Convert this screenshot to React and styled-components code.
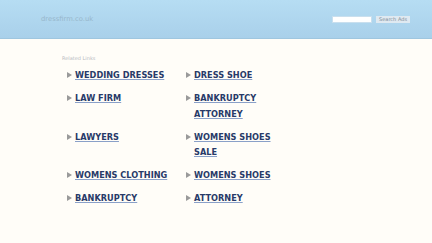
import React from 'react';
import styled, { createGlobalStyle } from 'styled-components';

const GlobalStyle = createGlobalStyle`
  html, body {
    margin: 0;
    padding: 0;
    background: #fffdf8;
    font-family: "DejaVu Sans", sans-serif;
  }
`;

const links = [
  ['WEDDING DRESSES', 'DRESS SHOE'],
  ['LAW FIRM', 'BANKRUPTCY ATTORNEY'],
  ['LAWYERS', 'WOMENS SHOES SALE'],
  ['WOMENS CLOTHING', 'WOMENS SHOES'],
  ['BANKRUPTCY', 'ATTORNEY'],
];

function App() {
  return (
    <>
      <GlobalStyle />
      <Header>
        <Domain>dressfirm.co.uk</Domain>
        <Search>
          <SearchInput type="text" />
          <SearchButton>Search Ads</SearchButton>
        </Search>
      </Header>
      <Main>
        <Related>Related Links</Related>
        <Grid>
          {links.map((row) =>
            row.map((label) => (
              <Item key={label}>
                <Arrow />
                <Link href="#">{label}</Link>
              </Item>
            ))
          )}
        </Grid>
      </Main>
    </>
  );
}

const Header = styled.header`
  height: 38px;
  border-bottom: 1px solid #9fc6df;
  background: linear-gradient(#b6ddf3, #a9d0ea);
  display: flex;
  align-items: center;
  justify-content: space-between;
  padding: 0 22px 0 41px;
`;

const Domain = styled.div`
  font-size: 6.8px;
  color: #97b6cb;
`;

const Search = styled.div`
  display: flex;
  align-items: center;
  gap: 4px;
`;

const SearchInput = styled.input`
  width: 38px;
  height: 5px;
  padding: 0;
  border: 1px solid #c9dfee;
  background: #ffffff;
`;

const SearchButton = styled.button`
  height: 7px;
  padding: 0 3px;
  border: none;
  background: #dfe9f1;
  color: #7d8a96;
  font-family: "DejaVu Sans", sans-serif;
  font-size: 5px;
  line-height: 7px;
`;

const Main = styled.main`
  padding: 16px 0 0 62px;
`;

const Related = styled.div`
  font-size: 5px;
  color: #b8bcc2;
  margin-bottom: 7px;
`;

const Grid = styled.div`
  display: grid;
  grid-template-columns: 119px 119px;
  row-gap: 7.5px;
  padding-left: 5px;
`;

const Item = styled.div`
  display: flex;
  align-items: flex-start;
  gap: 3px;
`;

const Arrow = styled.span`
  flex: none;
  width: 0;
  height: 0;
  margin-top: 4px;
  border-top: 3.5px solid transparent;
  border-bottom: 3.5px solid transparent;
  border-left: 5px solid #9a9a9a;
`;

const Link = styled.a`
  max-width: 100px;
  font-size: 8.2px;
  font-weight: bold;
  line-height: 15.5px;
  color: #283a68;
  text-decoration: underline;
  text-decoration-color: #8aa0c8;
`;

export default App;
